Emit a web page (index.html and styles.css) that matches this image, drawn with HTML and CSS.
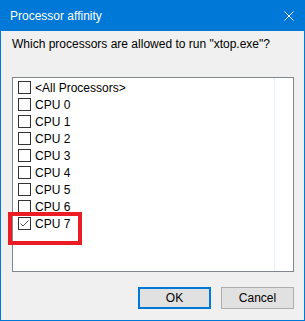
FILE: index.html
```html
<!DOCTYPE html>
<html lang="en">
<head>
  <meta charset="UTF-8" />
  <title>Processor affinity</title>
  <link rel="stylesheet" href="styles.css">
</head>
<body>
  <div class="window">
    <header class="titlebar">
      <span class="title">Processor affinity</span>
      <svg class="close" width="10" height="10" viewBox="0 0 10 10">
        <path d="M0.5 0.5 L9.5 9.5 M9.5 0.5 L0.5 9.5" stroke="#fff" stroke-width="1" fill="none" />
      </svg>
    </header>

    <main class="content">
      <p class="prompt">Which processors are allowed to run "xtop.exe"?</p>

      <div class="listbox">
        <ul class="items">
          <li class="item"><span class="box"></span>&lt;All Processors&gt;</li>
          <li class="item"><span class="box"></span>CPU 0</li>
          <li class="item"><span class="box"></span>CPU 1</li>
          <li class="item"><span class="box"></span>CPU 2</li>
          <li class="item"><span class="box"></span>CPU 3</li>
          <li class="item"><span class="box"></span>CPU 4</li>
          <li class="item"><span class="box"></span>CPU 5</li>
          <li class="item"><span class="box"></span>CPU 6</li>
          <li class="item highlight">
            <span class="box">
              <svg width="11" height="11" viewBox="0 0 11 11">
                <path d="M1.5 5.5 L4 8 L9.5 2.5" stroke="#555" stroke-width="1" fill="none" />
              </svg>
            </span>CPU 7
          </li>
        </ul>
      </div>

      <div class="buttons">
        <button class="btn default">OK</button>
        <button class="btn">Cancel</button>
      </div>
    </main>
  </div>
</body>
</html>
```

FILE: styles.css
```css
* {
  margin: 0;
  padding: 0;
  box-sizing: border-box;
}

html {
  font-family: "Segoe UI", "Liberation Sans", sans-serif;
  font-size: 12px;
}

body {
  background-color: #fff;
  color: #000;
}

.window {
  width: 305px;
  height: 321px;
  border: 1px solid #0078d7;
  background-color: #f0f0f0;
  display: flex;
  flex-direction: column;
}

.titlebar {
  height: 30px;
  flex-shrink: 0;
  background-color: #0078d7;
  color: #fff;
  display: flex;
  align-items: center;
  justify-content: space-between;
  padding: 0 10px 0 9px;
}

.title {
  font-size: 12px;
}

.content {
  display: flex;
  flex-direction: column;
  padding: 5px 10px 0 11px;
}

.prompt {
  line-height: 16px;
  margin-bottom: 25px;
}

.listbox {
  height: 195px;
  background-color: #fff;
  border: 1px solid #828790;
  display: flex;
}

.items {
  list-style: none;
  width: 262px;
  border-right: 1px solid #e5f0fb;
  padding: 1px 0 0 5px;
}

.item {
  position: relative;
  height: 17px;
  display: flex;
  align-items: center;
  gap: 4px;
  white-space: nowrap;
}

.box {
  width: 13px;
  height: 13px;
  border: 1px solid #333;
  background-color: #fff;
  display: flex;
  align-items: center;
  justify-content: center;
}

.highlight::after {
  content: "";
  position: absolute;
  left: -10px;
  top: -3px;
  width: 66px;
  height: 25px;
  border: 4px solid #ec1c24;
}

.buttons {
  display: flex;
  justify-content: flex-end;
  gap: 10px;
  margin-top: 15px;
}

.btn {
  width: 73px;
  height: 22px;
  font-family: inherit;
  font-size: 12px;
  color: #000;
  background-color: #e1e1e1;
  border: 1px solid #adadad;
}

.btn.default {
  border: 2px solid #0078d7;
}
```
